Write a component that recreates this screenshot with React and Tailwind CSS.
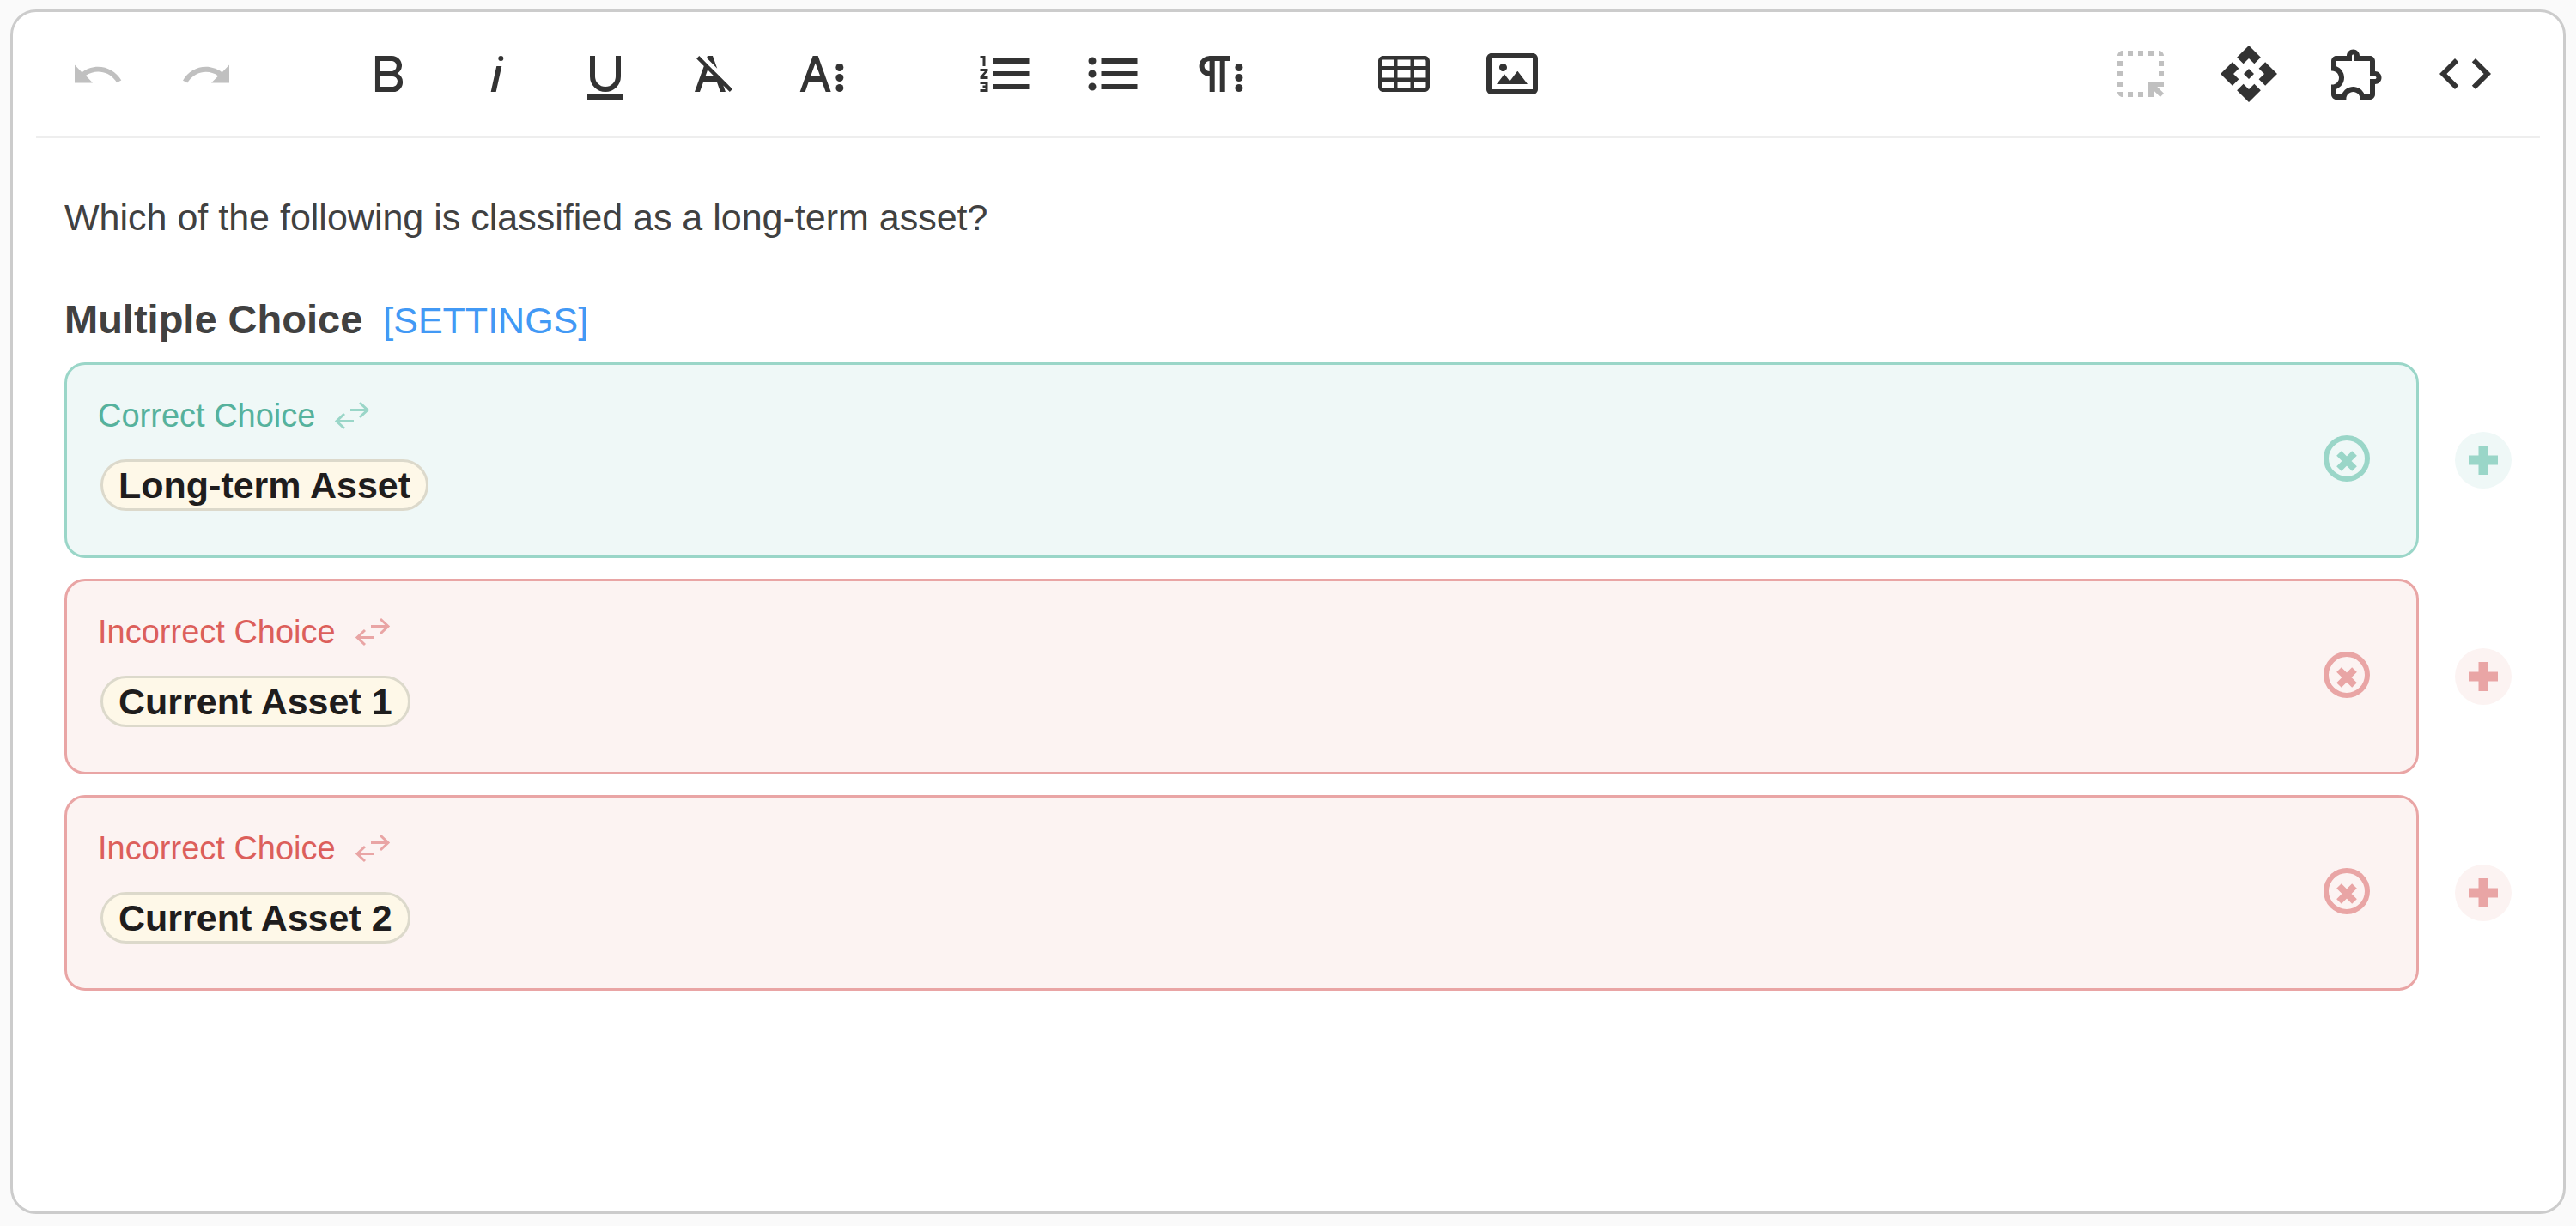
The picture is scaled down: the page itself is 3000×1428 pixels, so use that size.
import React from "react";
import { MdHighlightAlt, MdApi, MdCode } from "react-icons/md";

const DOTS = [9.5, 13.5, 17.5];

const historyTools = [
  { label: "Undo", disabled: true, d: "M10.4 9.4c-1.7.3-3.2.9-4.6 2L3 8.5v7h7L7.3 12.7c3.7-2.6 8.8-1.8 11.5 1.9.2.3.4.5.5.8l1.8-.9C18.9 10.8 14.7 8.7 10.4 9.4z" },
  { label: "Redo", disabled: true, d: "M13.6 9.4c1.7.3 3.2.9 4.6 2L21 8.5v7h-7l2.7-2.7C13 10.1 7.9 11 5.3 14.7c-.2.3-.4.5-.5.8L3 14.6C5.1 10.8 9.3 8.7 13.6 9.4z" },
];

const textTools = [
  { label: "Bold", d: "M15.25,11.8h0A3.68,3.68,0,0,0,17,9a3.93,3.93,0,0,0-3.86-4H6.65V19h7a3.74,3.74,0,0,0,3.7-3.78V15.1A3.64,3.64,0,0,0,15.25,11.8ZM8.65,7h4.2a2.09,2.09,0,0,1,2,1.3,2.09,2.09,0,0,1-1.37,2.61,2.23,2.23,0,0,1-.63.09H8.65Zm4.6,10H8.65V13h4.6a2.09,2.09,0,0,1,2,1.3,2.09,2.09,0,0,1-1.37,2.61A2.23,2.23,0,0,1,13.25,17Z" },
  { label: "Italic", d: "M11.76,9h2l-2.2,10h-2Zm1.68-4a1,1,0,1,0,1,1,1,1,0,0,0-1-1Z" },
  { label: "Underline", d: "M19,20v2H5V20ZM6,5v8a6,6,0,0,0,12,0V5H16v8a4,4,0,0,1-8,0V5Z" },
  { label: "Clear Formatting", d: "M11.48,10.09l-1.2-1.21L8.8,7.41,6.43,5,5.37,6.1,8.25,9,4.66,19h2l1.43-4h5.14l1.43,4h2l-.89-2.51L18.27,19l1.07-1.06L14.59,13.2ZM8.8,13l.92-2.56L12.27,13Zm.56-7.15L9.66,5h2l1.75,4.9Z" },
  { label: "More Text", dots: 18.95, d: "M13.55,19h2l-5-14h-2l-5,14h2l1.4-4h5.1Zm-5.9-6,1.9-5.2,1.9,5.2Z" },
];

const paragraphTools = [
  { label: "Ordered List", d: "M2.5,16h2v.5h-1v1h1V18h-2v1h3V15h-3Zm1-7h1V5h-2V6h1Zm-1,2H4.3L2.5,13.1V14h3V13H3.7l1.8-2.1V10h-3Zm5-5V8h14V6Zm0,12h14V16H7.5Zm0-5h14V11H7.5Z" },
  { label: "Unordered List", d: "M4,10.5a1.5,1.5,0,1,0,0,3a1.5,1.5,0,0,0,0-3ZM4,5.5a1.5,1.5,0,1,0,0,3a1.5,1.5,0,0,0,0-3ZM4,15.5a1.5,1.5,0,1,0,0,3a1.5,1.5,0,0,0,0-3ZM7.5,6v2h14V6ZM7.5,18h14v-2h-14ZM7.5,13h14v-2h-14Z" },
  { label: "More Paragraph", dots: 18.97, d: "M7.682,5a4.11,4.11,0,0,0-4.07,3.18,4,4,0,0,0,3.11,4.725h0l.027.005a3.766,3.766,0,0,0,.82.09v6h2V7h2V19h2V7h2V5ZM5.532,9a2,2,0,0,1,2-2v4A2,2,0,0,1,5.532,9Z" },
];

const insertTools = [
  { label: "Insert Table", d: "M20,5H4C2.9,5,2,5.9,2,7v10c0,1.1,0.9,2,2,2h16c1.1,0,2-0.9,2-2V7C22,5.9,21.1,5,20,5z M9.5,13.5v-3h5v3H9.5z M14.5,15v2.5h-5V15H14.5z M9.5,9V6.5h5V9H9.5z M3.5,7c0-0.3,0.2-0.5,0.5-0.5h4V9H3.5V7z M3.5,10.5H8v3H3.5V10.5z M3.5,17v-2H8v2.5H4C3.7,17.5,3.5,17.3,3.5,17z M20.5,17c0,0.3-0.2,0.5-0.5,0.5h-4V15h4.5V17z M20.5,13.5H16v-3h4.5V13.5z M16,9V6.5h4c0.3,0,0.5,0.2,0.5,0.5v2H16z" },
  { label: "Insert Image", d: "M14.2,11l3.8,5H6l3-3.9l2.1,2.7L14,11H14.2z M8.5,11c0.8,0,1.5-0.7,1.5-1.5S9.3,8,8.5,8S7,8.7,7,9.5C7,10.3,7.7,11,8.5,11z M22,6v12c0,1.1-0.9,2-2,2H4c-1.1,0-2-0.9-2-2V6c0-1.1,0.9-2,2-2h16C21.1,4,22,4.9,22,6z M20,8.8V6H4v12h16V8.8z" },
];

const viewTools = [
  { label: "Select Region", disabled: true, Icon: MdHighlightAlt },
  { label: "Components", Icon: MdApi },
  { label: "Extensions", d: "M10.5 4.5c.28 0 .5.22.5.5v2h6v6h2c.28 0 .5.22.5.5s-.22.5-.5.5h-2v6h-2.12c-.68-1.75-2.39-3-4.38-3s-3.7 1.25-4.38 3H4v-2.12c1.75-.68 3-2.39 3-4.38 0-1.99-1.24-3.7-2.99-4.38L4 7h6V5c0-.28.22-.5.5-.5m0-2C9.12 2.5 8 3.62 8 5H4c-1.1 0-1.99.9-1.99 2v3.8h.29c1.49 0 2.7 1.21 2.7 2.7s-1.21 2.7-2.7 2.7H2V20c0 1.1.9 2 2 2h3.8v-.3c0-1.49 1.21-2.7 2.7-2.7s2.7 1.21 2.7 2.7v.3H17c1.1 0 2-.9 2-2v-4c1.38 0 2.5-1.12 2.5-2.5S20.38 11 19 11V7c0-1.1-.9-2-2-2h-4c0-1.38-1.12-2.5-2.5-2.5z" },
  { label: "Code View", Icon: MdCode },
];

const choices = [
  { correct: true, text: "Long-term Asset" },
  { correct: false, text: "Current Asset 1" },
  { correct: false, text: "Current Asset 2" },
];

function ToolGroup({ tools }) {
  return (
    <div className="flex">
      {tools.map(({ label, disabled, d, dots, Icon }) => (
        <button
          key={label}
          type="button"
          aria-label={label}
          disabled={disabled}
          className="flex h-36 w-[126px] items-center justify-center text-[#333333] disabled:text-[#c0c0c0]"
        >
          {Icon ? (
            <Icon className="size-[72px]" />
          ) : (
            <svg viewBox="0 0 24 24" className="size-[72px]" fill="currentColor">
              <path d={d} />
              {dots && DOTS.map((y) => <circle key={y} cx={dots} cy={y} r="1.5" />)}
            </svg>
          )}
        </button>
      ))}
    </div>
  );
}

function SwapIcon() {
  return (
    <svg viewBox="0 0 42 34" className="h-[34px] w-[42px]" fill="none" stroke="currentColor" strokeWidth="3">
      <path d="M19 10.5h20M30 2l9 8.5-9 8.5M23 23.5H3M12 15l-9 8.5 9 8.5" />
    </svg>
  );
}

function Choice({ correct, text }) {
  const box = correct ? "border-[#9ad6c8] bg-[#eff8f7]" : "border-[#e9a5a5] bg-[#fcf3f2]";
  const label = correct ? "text-[#56b29d]" : "text-[#dc5f5b]";
  const icon = correct ? "text-[#9ad6c8]" : "text-[#e9a5a5]";
  const disc = correct ? "bg-[#eff8f7]" : "bg-[#fcf3f2]";
  return (
    <li className="flex items-center gap-[42px]">
      <div className={`flex flex-1 items-center justify-between rounded-3xl border-3 pt-[39px] pr-[54px] pb-[52px] pl-9 ${box}`}>
        <div className="flex flex-col items-start gap-[31px]">
          <div className="flex items-center gap-[22px]">
            <span className={`text-[38px] leading-10 ${label}`}>{correct ? "Correct Choice" : "Incorrect Choice"}</span>
            <button type="button" aria-label="Swap choice type" className={icon}>
              <SwapIcon />
            </button>
          </div>
          <span className="ml-[3px] flex h-[60px] items-center rounded-full border-3 border-[#dcd9cb] bg-[#fef8e8] px-[18px] text-[43px] font-bold text-[#1f1d1d]">
            {text}
          </span>
        </div>
        <button type="button" aria-label={`Remove ${text}`} className={`mt-2 ${icon}`}>
          <svg viewBox="0 0 54 54" className="size-[54px]" fill="none" stroke="currentColor">
            <circle cx="27" cy="27" r="24" strokeWidth="6" />
            <path d="M18 21l18 18M36 21l-18 18" strokeWidth="8" />
          </svg>
        </button>
      </div>
      <button type="button" aria-label="Add choice" className={`flex size-[66px] items-center justify-center rounded-full ${disc} ${icon}`}>
        <svg viewBox="0 0 34 34" className="size-[34px]" fill="none" stroke="currentColor" strokeWidth="11">
          <path d="M17 0v34M0 17h34" />
        </svg>
      </button>
    </li>
  );
}

export default function App() {
  return (
    <div className="flex min-h-screen bg-[#fafafa] px-3 pt-[11px] pb-[14px] font-['Liberation_Sans',Arial,sans-serif] text-[#414141]">
      <main className="flex-1 rounded-[30px] border-3 border-[#cccccc] bg-white px-[27px]">
        <div role="toolbar" aria-label="Editor toolbar" className="flex justify-between border-b-3 border-[#eeeeee] pr-6 pl-[9px]">
          <div className="flex gap-[87px]">
            <ToolGroup tools={historyTools} />
            <ToolGroup tools={textTools} />
            <ToolGroup tools={paragraphTools} />
            <ToolGroup tools={insertTools} />
          </div>
          <ToolGroup tools={viewTools} />
        </div>
        <section className="px-[33px] pt-[62px]">
          <p className="text-[43px] leading-[60px]">Which of the following is classified as a long-term asset?</p>
          <div className="mt-[59px] mb-[19px] flex items-baseline gap-6 leading-[60px]">
            <h2 className="text-[47px] font-bold">Multiple Choice</h2>
            <a href="#settings" className="text-[43px] text-[#4299f5]">[SETTINGS]</a>
          </div>
          <ul className="flex flex-col gap-6">
            {choices.map((choice) => (
              <Choice key={choice.text} {...choice} />
            ))}
          </ul>
        </section>
      </main>
    </div>
  );
}
